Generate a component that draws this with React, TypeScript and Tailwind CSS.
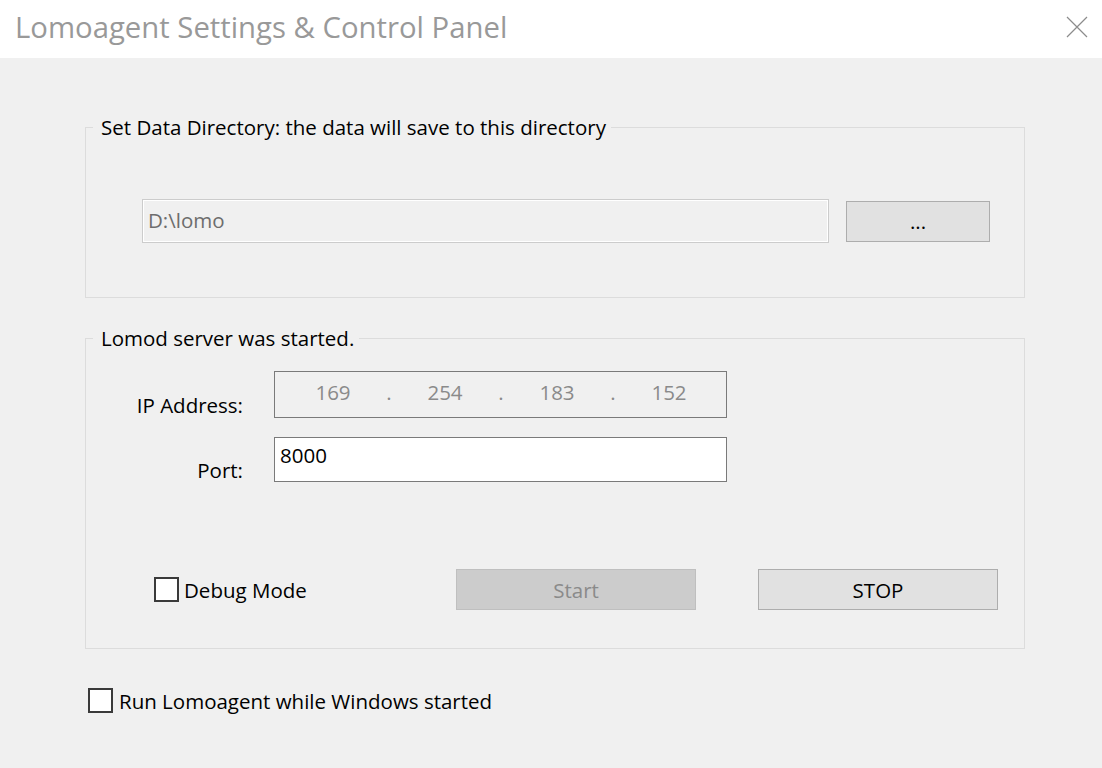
export default function App() {
  const font = { fontFamily: '"Open Sans", "Noto Sans", sans-serif' };
  return (
    <div className="w-[1102px] h-[768px] bg-[#f0f0f0] flex flex-col text-[20.5px] leading-[24px] text-black" style={font}>
      {/* Title bar */}
      <div className="h-[58px] bg-white flex items-start justify-between">
        <div className="pt-[11px] pl-[15px] text-[29.3px] leading-[32px] text-[#999999]">
          Lomoagent Settings &amp; Control Panel
        </div>
        <svg className="mt-[16px] mr-[14px]" width="22" height="22" viewBox="0 0 22 22">
          <path d="M1 1 L21 21 M21 1 L1 21" stroke="#8c8c8c" strokeWidth="1.2" fill="none" />
        </svg>
      </div>

      <div className="pl-[85px] pt-[57px] flex flex-col">
        {/* Data directory group */}
        <fieldset className="w-[940px] border border-[#dcdcdc]">
          <legend className="ml-[7px] pl-[8px] pr-[5px]">Set Data Directory: the data will save to this directory</legend>
          <div className="pl-[56px] pt-[60px] pb-[54px] flex items-center">
            <div className="w-[687px] h-[44px] border border-[#cccccc] shadow-[inset_0_0_0_1px_#ffffff] bg-[#f0f0f0] flex items-center pl-[5px] pb-[3px] text-[#6d6d6d]">
              {"D:\\lomo"}
            </div>
            <button className="ml-[17px] w-[144px] h-[41px] bg-[#e1e1e1] border border-[#adadad] flex items-center justify-center">
              ...
            </button>
          </div>
        </fieldset>

        {/* Server group */}
        <fieldset className="mt-[28px] w-[940px] border border-[#dcdcdc]">
          <legend className="ml-[7px] pl-[8px] pr-[5px]">Lomod server was started.</legend>
          <div className="pt-[21px] pb-[38px] flex flex-col">
            <div className="flex items-end">
              <div className="w-[157px] text-right pb-[1px]">IP Address:</div>
              <div className="ml-[31px] w-[453px] h-[47px] border border-[#7a7a7a] bg-[#f0f0f0] flex items-start pt-[8px] pl-[28px] text-[#8a8a8a]">
                <span className="w-[60px] text-center">169</span>
                <span className="w-[52px] text-center">.</span>
                <span className="w-[60px] text-center">254</span>
                <span className="w-[52px] text-center">.</span>
                <span className="w-[60px] text-center">183</span>
                <span className="w-[52px] text-center">.</span>
                <span className="w-[60px] text-center">152</span>
              </div>
            </div>
            <div className="mt-[19px] flex items-end">
              <div className="w-[157px] text-right">Port:</div>
              <div className="ml-[31px] w-[453px] h-[45px] border border-[#7a7a7a] bg-white pt-[5px] pl-[5px]">8000</div>
            </div>
            <div className="mt-[87px] pl-[68px] flex items-center">
              <label className="w-[302px] flex items-center gap-[5px]">
                <span className="w-[25px] h-[25px] border-2 border-[#3a3a3a] bg-white" />
                <span>Debug Mode</span>
              </label>
              <button className="w-[240px] h-[41px] bg-[#cccccc] border border-[#bfbfbf] text-[#8a8a8a]">Start</button>
              <button className="ml-[62px] w-[240px] h-[41px] bg-[#e1e1e1] border border-[#adadad]">STOP</button>
            </div>
          </div>
        </fieldset>

        <label className="mt-[39px] ml-[3px] flex items-center gap-[6px]">
          <span className="w-[25px] h-[25px] border-2 border-[#3a3a3a] bg-white" />
          <span>Run Lomoagent while Windows started</span>
        </label>
      </div>
    </div>
  );
}
